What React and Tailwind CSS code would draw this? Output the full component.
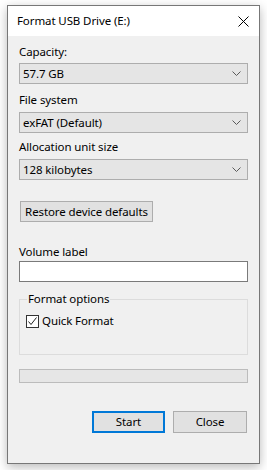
import React from "react";

const font = { fontFamily: "'Noto Sans', sans-serif" };

// small chevron used in the combo boxes
const Chevron = () => (
    <svg width="9" height="6" viewBox="0 0 9 6" className="shrink-0">
        <path d="M0.5 0.5 L4.5 4.5 L8.5 0.5" fill="none" stroke="#5a5a5a" strokeWidth="1" />
    </svg>
);

const Combo = ({ value, className = "" }) => (
    <div className={`flex items-center justify-between h-[21px] bg-[#e5e5e5] border border-[#adadad] pl-[3px] pr-[6px] ${className}`}>
        <span>{value}</span>
        <Chevron />
    </div>
);

const Label = ({ children, className = "" }) => (
    <div className={`leading-[16px] ${className}`}>{children}</div>
);

export default function App() {
    return (
        <div className="w-[267px] h-[470px] bg-white pt-[5px] pl-[7px] text-[11.5px] tracking-[-0.1px] text-black" style={font}>
            <div className="w-[253px] h-[459px] border border-[#777777] bg-[#f0f0f0] flex flex-col shadow-[0_3px_10px_rgba(0,0,0,0.28)]">

                {/* TITLE BAR */}
                <div className="h-[30px] bg-white flex items-center justify-between pl-[9px] pr-[10px] shrink-0">
                    <span>Format USB Drive (E:)</span>
                    <svg width="11" height="11" viewBox="0 0 11 11">
                        <path d="M0.5 0.5 L10.5 10.5 M10.5 0.5 L0.5 10.5" stroke="#000" strokeWidth="1" />
                    </svg>
                </div>

                {/* BODY */}
                <div className="flex flex-col px-[11px] pt-[8px]">
                    <Label>Capacity:</Label>
                    <Combo value="57.7 GB" className="mt-[3px]" />

                    <Label className="mt-[8px]">File system</Label>
                    <Combo value="exFAT (Default)" className="mt-[4px]" />

                    <Label className="mt-[6px]">Allocation unit size</Label>
                    <Combo value="128 kilobytes" className="mt-[4px]" />

                    <button className="mt-[21px] ml-[1px] self-start h-[21px] w-[133px] bg-[#e1e1e1] border border-[#adadad]">
                        Restore device defaults
                    </button>

                    <Label className="mt-[22px]">Volume label</Label>
                    <div className="mt-[1px] h-[21px] bg-white border border-[#7a7a7a]" />

                    <fieldset className="mt-[9px] h-[64px] border border-[#dcdcdc] px-[6px]">
                        <legend className="ml-[1px] px-[1px] leading-[16px]">Format options</legend>
                        <div className="flex items-center gap-[3px] mt-[6px]">
                            <div className="w-[13px] h-[13px] bg-white border border-[#333333] flex items-center justify-center">
                                <svg width="11" height="11" viewBox="0 0 11 11">
                                    <path d="M1.5 5.5 L4 8.5 L9.5 1.5" fill="none" stroke="#222" strokeWidth="1" />
                                </svg>
                            </div>
                            <span className="leading-[16px]">Quick Format</span>
                        </div>
                    </fieldset>

                    <div className="mt-[14px] h-[14px] bg-[#e6e6e6] border border-[#bcbcbc]" />

                    <div className="mt-[28px] flex justify-end gap-[8px] pr-[1px]">
                        <button className="w-[73px] h-[22px] bg-[#e1e1e1] border-2 border-[#0078d7]">Start</button>
                        <button className="w-[74px] h-[22px] bg-[#e1e1e1] border border-[#adadad]">Close</button>
                    </div>
                </div>
            </div>
        </div>
    );
}
